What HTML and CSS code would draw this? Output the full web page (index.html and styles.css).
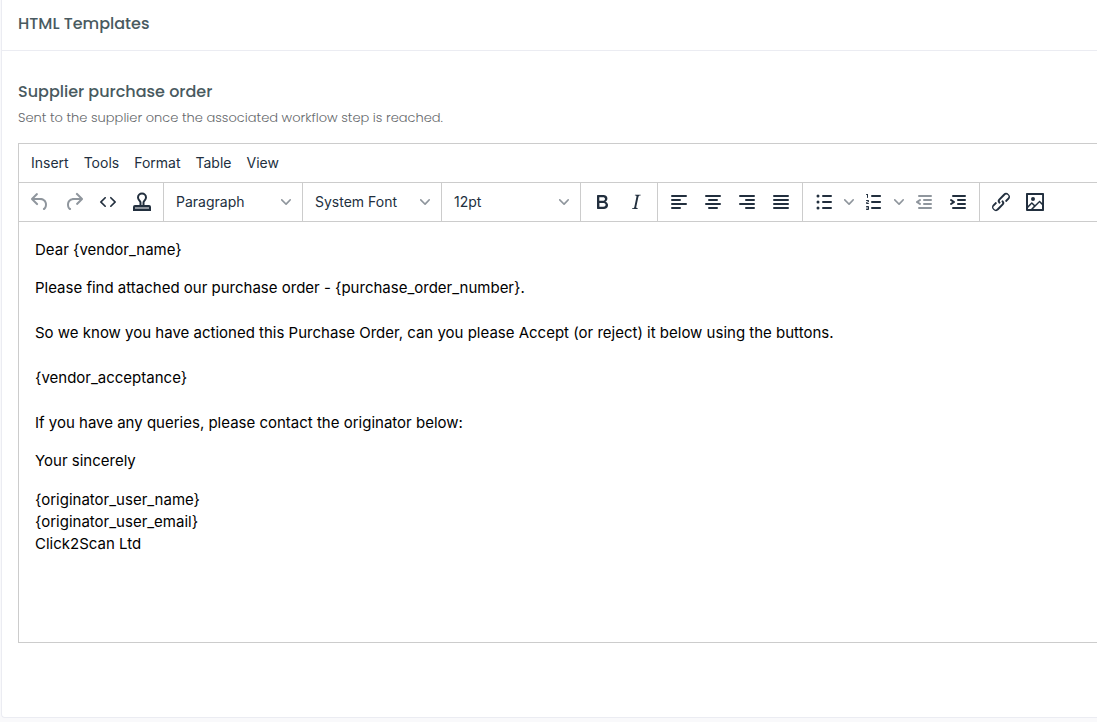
FILE: index.html
```html
<!DOCTYPE html>
<html lang="en">
<head>
<meta charset="utf-8">
<meta name="viewport" content="width=device-width, initial-scale=1">
<title>HTML Templates</title>
<link rel="stylesheet" href="styles.css">
</head>
<body>
<main class="card">
  <header class="card-header"><h1 class="title">HTML Templates</h1></header>
  <section class="card-body">
    <h2 class="title">Supplier purchase order</h2>
    <p class="hint">Sent to the supplier once the associated workflow step is reached.</p>
    <div class="editor">
      <nav class="menubar" aria-label="Editor menu">
        <button type="button">Insert</button>
        <button type="button">Tools</button>
        <button type="button">Format</button>
        <button type="button">Table</button>
        <button type="button">View</button>
      </nav>
      <div class="toolbar" role="toolbar" aria-label="Formatting">
        <div class="group">
          <button type="button" class="tool" aria-label="Undo" disabled><svg viewBox="0 0 24 24"><path d="M6.4 8H12c3.7 0 6.2 2 6.8 5.1.6 2.7-.4 5.6-2.3 6.8a1 1 0 01-1-1.8c1.1-.6 1.8-2.7 1.4-4.6-.5-2.1-2.1-3.5-4.9-3.5H6.4l3.3 3.3a1 1 0 11-1.4 1.4l-5-5a1 1 0 010-1.4l5-5a1 1 0 011.4 1.4L6.4 8z"/></svg></button>
          <button type="button" class="tool" aria-label="Redo" disabled><svg viewBox="0 0 24 24"><path d="M17.6 10H12c-2.8 0-4.4 1.4-4.9 3.5-.4 2 .3 4 1.4 4.6a1 1 0 11-1 1.8c-2-1.2-2.9-4.1-2.3-6.8.6-3 3-5.1 6.8-5.1h5.6l-3.3-3.3a1 1 0 111.4-1.4l5 5a1 1 0 010 1.4l-5 5a1 1 0 01-1.4-1.4l3.3-3.3z"/></svg></button>
          <button type="button" class="tool" aria-label="Source code"><svg viewBox="0 0 24 24"><path d="M9.8 15.7c.3.3.3.8 0 1-.3.4-.9.4-1.2 0l-4.4-4.1a.8.8 0 010-1.2l4.4-4.2c.3-.3.9-.3 1.2 0 .3.3.3.8 0 1.1L6 12l3.8 3.7zM14.2 15.7c-.3.3-.3.8 0 1 .4.4.9.4 1.2 0l4.4-4.1c.3-.3.3-.9 0-1.2l-4.4-4.2a.8.8 0 00-1.2 0c-.3.3-.3.8 0 1.1L18 12l-3.8 3.7z"/></svg></button>
          <button type="button" class="tool" aria-label="Insert field"><svg viewBox="0 0 24 24"><path class="line" d="M10.500 16v-3.500c0-1.500-2.500-2.500-2.500-5a4 4 0 018 0c0 2.500-2.500 3.500-2.500 5V16"/><path fill-rule="evenodd" d="M5 15h14q2 0 2 2v4H3v-4q0-2 2-2zm0 2.500v1h14v-1z"/></svg></button>
        </div>
        <div class="group">
          <label class="picker"><select aria-label="Block format"><option>Paragraph</option></select><svg viewBox="0 0 10 10"><path d="M8.700 2.200c.3-.3.8-.3 1 0 .4.400.4.900 0 1.200L5.700 7.800c-.3.300-.9.300-1.200 0L.2 3.400a.8.8 0 010-1.200c.3-.3.8-.3 1.100 0L5 6l3.700-3.800z"/></svg></label>
        </div>
        <div class="group">
          <label class="picker"><select aria-label="Font"><option>System Font</option></select><svg viewBox="0 0 10 10"><path d="M8.700 2.200c.3-.3.8-.3 1 0 .4.400.4.900 0 1.200L5.700 7.800c-.3.300-.9.300-1.200 0L.2 3.400a.8.8 0 010-1.200c.3-.3.8-.3 1.100 0L5 6l3.700-3.800z"/></svg></label>
        </div>
        <div class="group">
          <label class="picker"><select aria-label="Font size"><option>12pt</option></select><svg viewBox="0 0 10 10"><path d="M8.700 2.200c.3-.3.8-.3 1 0 .4.400.4.900 0 1.200L5.700 7.800c-.3.300-.9.300-1.200 0L.2 3.400a.8.8 0 010-1.200c.3-.3.8-.3 1.100 0L5 6l3.700-3.800z"/></svg></label>
        </div>
        <div class="group">
          <button type="button" class="tool" aria-label="Bold"><svg viewBox="0 0 24 24"><path fill-rule="evenodd" d="M7.800 19c-.3 0-.5 0-.6-.2l-.2-.5V5.700c0-.2 0-.4.2-.5l.6-.2h5c1.500 0 2.700.3 3.500 1 .7.600 1.100 1.400 1.100 2.500a3 3 0 01-.6 1.900c-.4.600-1 1-1.600 1.200.4.100.9.300 1.300.6s.8.700 1 1.200c.4.400.5 1 .5 1.600 0 1.300-.4 2.300-1.300 3-.8.700-2.100 1-3.800 1H7.800zm5-8.300c.6 0 1.200-.1 1.600-.5.400-.3.600-.7.600-1.300 0-1.100-.8-1.700-2.300-1.700H9.300v3.500h3.400zm.5 6c.7 0 1.300-.1 1.700-.4.400-.4.600-.9.600-1.500s-.2-1-.7-1.400c-.4-.3-1-.4-2-.4H9.400v3.800h4z"/></svg></button>
          <button type="button" class="tool" aria-label="Italic"><svg viewBox="0 0 24 24"><path d="M16.700 4.700l-.1.900h-.3c-.6 0-1 0-1.400.3-.3.300-.4.600-.5 1.100l-2.100 9.800v.6c0 .5.400.8 1.400.8h.2l-.2.800H8l.2-.8h.2c1.100 0 1.800-.5 2-1.500l2-9.800.1-.5c0-.6-.4-.8-1.400-.8h-.3l.2-.9h5.700z"/></svg></button>
        </div>
        <div class="group">
          <button type="button" class="tool" aria-label="Align left"><svg viewBox="0 0 24 24"><path d="M5 5h14q1 0 1 1t-1 1H5q-1 0-1-1t1-1zm0 4h8q1 0 1 1t-1 1H5q-1 0-1-1t1-1zm0 4h14q1 0 1 1t-1 1H5q-1 0-1-1t1-1zm0 4h8q1 0 1 1t-1 1H5q-1 0-1-1t1-1z"/></svg></button>
          <button type="button" class="tool" aria-label="Align center"><svg viewBox="0 0 24 24"><path d="M5 5h14q1 0 1 1t-1 1H5q-1 0-1-1t1-1zm3 4h8q1 0 1 1t-1 1H8q-1 0-1-1t1-1zm-3 4h14q1 0 1 1t-1 1H5q-1 0-1-1t1-1zm3 4h8q1 0 1 1t-1 1H8q-1 0-1-1t1-1z"/></svg></button>
          <button type="button" class="tool" aria-label="Align right"><svg viewBox="0 0 24 24"><path d="M5 5h14q1 0 1 1t-1 1H5q-1 0-1-1t1-1zm6 4h8q1 0 1 1t-1 1h-8q-1 0-1-1t1-1zm-6 4h14q1 0 1 1t-1 1H5q-1 0-1-1t1-1zm6 4h8q1 0 1 1t-1 1h-8q-1 0-1-1t1-1z"/></svg></button>
          <button type="button" class="tool" aria-label="Justify"><svg viewBox="0 0 24 24"><path d="M5 5h14q1 0 1 1t-1 1H5q-1 0-1-1t1-1zm0 4h14q1 0 1 1t-1 1H5q-1 0-1-1t1-1zm0 4h14q1 0 1 1t-1 1H5q-1 0-1-1t1-1zm0 4h14q1 0 1 1t-1 1H5q-1 0-1-1t1-1z"/></svg></button>
        </div>
        <div class="group">
          <button type="button" class="tool" aria-label="Bullet list"><svg viewBox="0 0 24 24"><path d="M11 5h8q1 0 1 1t-1 1h-8q-1 0-1-1t1-1zm0 6h8q1 0 1 1t-1 1h-8q-1 0-1-1t1-1zm0 6h8q1 0 1 1t-1 1h-8q-1 0-1-1t1-1z"/><circle cx="6" cy="6" r="1.500"/><circle cx="6" cy="12" r="1.500"/><circle cx="6" cy="18" r="1.500"/></svg></button>
          <button type="button" class="more" aria-label="Bullet styles"><svg viewBox="0 0 10 10"><path d="M8.700 2.200c.3-.3.8-.3 1 0 .4.400.4.900 0 1.200L5.700 7.800c-.3.300-.9.300-1.200 0L.2 3.400a.8.8 0 010-1.200c.3-.3.8-.3 1.100 0L5 6l3.700-3.800z"/></svg></button>
          <button type="button" class="tool" aria-label="Numbered list"><svg viewBox="0 0 24 24"><path d="M10 17h8c.6 0 1 .4 1 1s-.4 1-1 1h-8a1 1 0 010-2zm0-6h8c.6 0 1 .4 1 1s-.4 1-1 1h-8a1 1 0 010-2zm0-6h8c.6 0 1 .4 1 1s-.4 1-1 1h-8a1 1 0 110-2zM6 4v3.500c0 .3-.2.500-.5.500a.5.500 0 01-.5-.5V5h-.5a.5.500 0 010-1H6zm-1 8.800l.2.200h1.300c.3 0 .5.200.5.500s-.2.500-.5.500H4.900a1 1 0 01-.9-1V13c0-.4.300-.8.600-1l1.200-.4.200-.3a.2.200 0 00-.2-.2H4.500a.5.500 0 01-.5-.5c0-.3.200-.5.500-.5h1.600c.5 0 .9.400.9 1v.1c0 .4-.3.800-.6 1l-1.200.4-.2.200zM7 17v2c0 .6-.4 1-1 1H4.500a.5.500 0 010-1h1.200c.2 0 .3-.1.300-.3 0-.2-.1-.3-.3-.3H4.400a.4.400 0 110-.8h1.300c.2 0 .3-.1.300-.3 0-.2-.1-.3-.3-.3H4.500a.5.500 0 110-1H6c.6 0 1 .4 1 1z"/></svg></button>
          <button type="button" class="more" aria-label="Number styles"><svg viewBox="0 0 10 10"><path d="M8.700 2.200c.3-.3.8-.3 1 0 .4.400.4.900 0 1.200L5.700 7.800c-.3.300-.9.300-1.200 0L.2 3.400a.8.8 0 010-1.200c.3-.3.8-.3 1.100 0L5 6l3.700-3.800z"/></svg></button>
          <button type="button" class="tool" aria-label="Decrease indent" disabled><svg viewBox="0 0 24 24"><path d="M7 5h12q1 0 1 1t-1 1H7q-1 0-1-1t1-1zm5 4h7q1 0 1 1t-1 1h-7q-1 0-1-1t1-1zm0 4h7q1 0 1 1t-1 1h-7q-1 0-1-1t1-1zm-5 4h12q1 0 1 1t-1 1H7q-1 0-1-1t1-1zm1.600-3.800a1 1 0 01-1.200 1.600l-3-2a1 1 0 010-1.600l3-2a1 1 0 011.200 1.600L6.800 12l1.800 1.200z"/></svg></button>
          <button type="button" class="tool" aria-label="Increase indent"><svg viewBox="0 0 24 24"><path d="M7 5h12q1 0 1 1t-1 1H7q-1 0-1-1t1-1zm5 4h7q1 0 1 1t-1 1h-7q-1 0-1-1t1-1zm0 4h7q1 0 1 1t-1 1h-7q-1 0-1-1t1-1zm-5 4h12q1 0 1 1t-1 1H7q-1 0-1-1t1-1zm-2.600-3.800L6.200 12l-1.800-1.200a1 1 0 011.200-1.600l3 2a1 1 0 010 1.600l-3 2a1 1 0 11-1.200-1.600z"/></svg></button>
        </div>
        <div class="group">
          <button type="button" class="tool" aria-label="Link"><svg viewBox="0 0 24 24"><path d="M6.200 12.300a1 1 0 011.400 1.400l-2.100 2a2 2 0 102.700 2.800l4.800-4.800a1 1 0 000-1.400 1 1 0 111.400-1.300 2.900 2.900 0 010 4L9.600 20a3.900 3.900 0 01-5.500-5.500l2-2zm11.600-.6a1 1 0 01-1.400-1.400l2-2a2 2 0 10-2.600-2.800L11 10.300a1 1 0 000 1.400A1 1 0 119.600 13a2.900 2.900 0 010-4L14.400 4a3.900 3.900 0 015.500 5.500l-2 2z"/></svg></button>
          <button type="button" class="tool" aria-label="Image"><svg viewBox="0 0 24 24"><path fill-rule="evenodd" d="M5 15.700l3.300-3.200c.3-.3.700-.3 1 0L12 15l4.100-4c.3-.4.800-.4 1 0l2 1.900V5H5v10.700zM5 18v1h3l2.800-2.900-2-2L5 17.900zm14-3l-2.500-2.400-6.400 6.500H19v-4zM4 3h16c.6 0 1 .4 1 1v16c0 .6-.4 1-1 1H4a1 1 0 01-1-1V4c0-.6.4-1 1-1zm6 8a2 2 0 100-4 2 2 0 000 4z"/></svg></button>
        </div>
      </div>
      <div class="content" contenteditable="true" spellcheck="false" role="textbox" aria-multiline="true" aria-label="Template text">
        <p>Dear {vendor_name}</p>
        <p>Please find attached our purchase order - {purchase_order_number}.<br><br>So we know you have actioned this Purchase Order, can you please Accept (or reject) it below using the buttons.<br><br>{vendor_acceptance}<br><br>If you have any queries, please contact the originator below:</p>
        <p>Your sincerely</p>
        <p>{originator_user_name}<br>{originator_user_email}<br>Click2Scan Ltd</p>
      </div>
    </div>
  </section>
</main>
</body>
</html>
```
FILE: styles.css
```css
* { box-sizing: border-box; }

body {
  margin: 0;
  padding: 0 0 4px 1px;
  background: #f9f9fb;
  font-family: Inter, sans-serif;
}

.card {
  background: #fff;
  border: 1px solid #ebecf2;
  border-width: 0 0 1px 1px;
  border-bottom-left-radius: 4px;
}

.card-header {
  padding: 12px 16px 14px;
  border-bottom: 1px solid #ebecf2;
}

.title {
  margin: 0;
  color: #495a60;
  font: 500 16px/24px Poppins, Inter, sans-serif;
}

.card-body { padding: 29px 0 74px 16px; }

.hint {
  margin: 4px 0 15px;
  color: #66696c;
  font: 300 13px/20px Poppins, Inter, sans-serif;
}

.editor {
  border: 1px solid #ccc;
  border-right: 0;
  color: #222f3e;
}

.menubar {
  display: flex;
  padding: 0 4px;
  height: 38px;
  align-items: center;
}

button,
select {
  border: 0;
  background: none;
  color: inherit;
  font: 14px/24px Inter, sans-serif;
}

.menubar button { padding: 0 7px 0 8px; }

.toolbar {
  display: flex;
  border: 1px solid #ccc;
  border-width: 1px 0;
}

.group {
  display: flex;
  align-items: center;
  height: 38px;
  padding: 0 4px;
}

.group:not(:last-child) { border-right: 1px solid #ccc; }

.tool,
.more {
  display: flex;
  align-items: center;
  justify-content: center;
  width: 34px;
  height: 34px;
  padding: 0;
}

.more { width: 16px; }

svg { fill: #222f3e; }

.tool svg { width: 24px; height: 24px; }

.tool:disabled svg { opacity: 0.5; }

.line {
  fill: none;
  stroke: #222f3e;
  stroke-width: 2;
  stroke-linejoin: round;
}

.more svg,
.picker svg {
  width: 10px;
  height: 10px;
  opacity: 0.5;
}

.picker {
  display: grid;
  align-items: center;
  width: 130px;
}

.picker select,
.picker svg { grid-area: 1 / 1; }

.picker select {
  appearance: none;
  width: 100%;
  padding: 0 24px 0 8px;
}

.picker svg {
  justify-self: end;
  margin-right: 7px;
  pointer-events: none;
}

.content {
  min-height: 420px;
  padding: 17px 16px 16px;
  color: #000;
  font: 15px/1.4rem Inter, sans-serif;
  outline: 0;
}

.content p { margin: 0 0 16px; }
```
